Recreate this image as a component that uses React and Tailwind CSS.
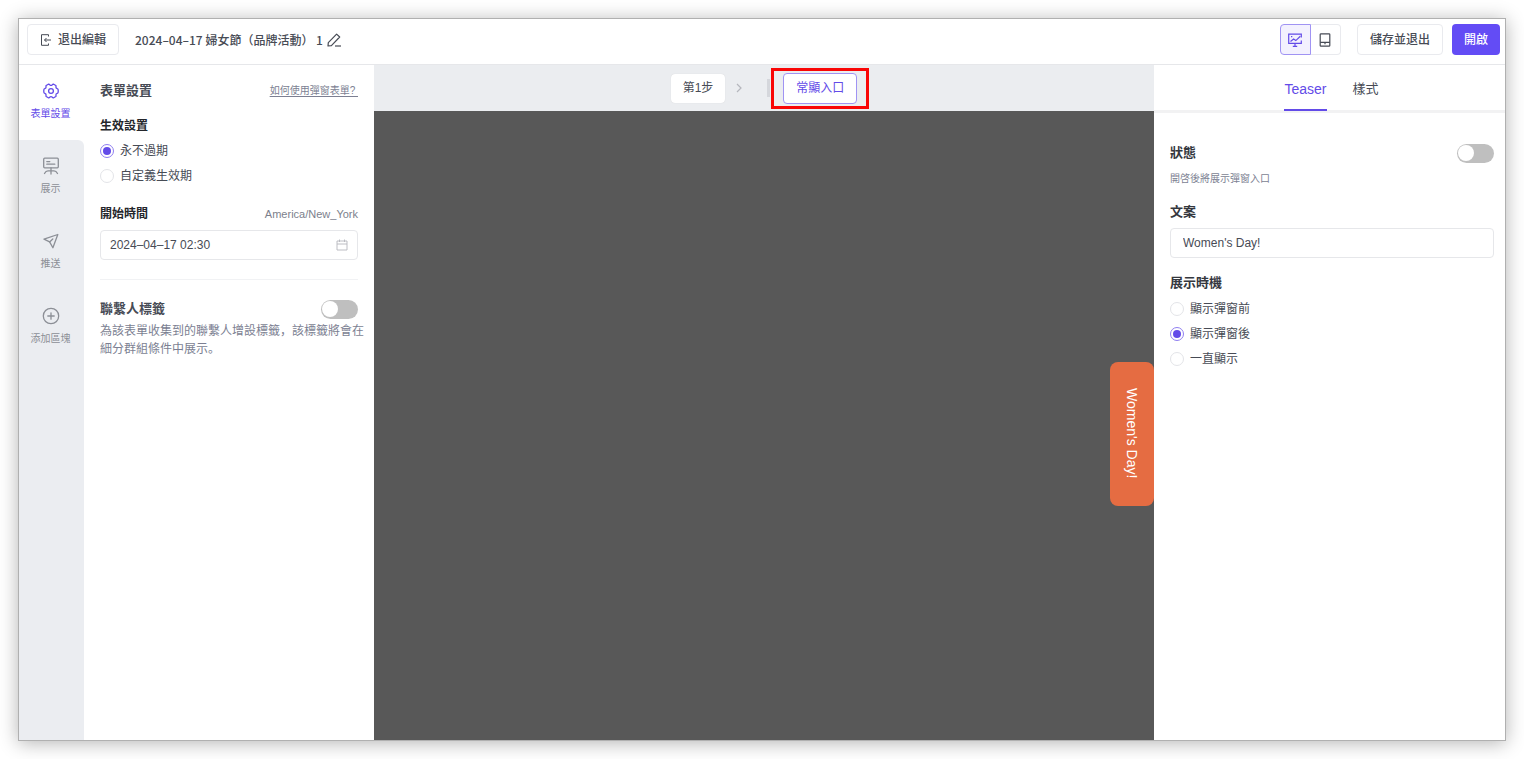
import { useState } from 'react';

const NAV = [
  { key: 'settings', label: '表單設置', Icon: GearIcon },
  { key: 'display', label: '展示', Icon: BoardIcon },
  { key: 'push', label: '推送', Icon: PlaneIcon },
  { key: 'block', label: '添加區塊', Icon: PlusIcon },
];

const TIMINGS = ['顯示彈窗前', '顯示彈窗後', '一直顯示'];

function GearIcon() {
  return (
    <svg width="16" height="16" viewBox="0 0 16 16" fill="none" stroke="currentColor" strokeWidth="1.3" strokeLinejoin="round">
      <path d="M5.300 1.200Q6.300 1 6.900 1.900Q8 2.900 9.100 1.900Q9.700 1 10.700 1.200L12.800 2.500Q13.300 3.200 12.900 4.100Q12.900 5.300 14.200 5.700Q15.200 6 15.200 7V9Q15.200 10 14.200 10.300Q12.900 10.700 12.900 11.900Q13.300 12.800 12.800 13.500L10.700 14.800Q9.700 15 9.100 14.100Q8 13.100 6.900 14.100Q6.300 15 5.300 14.800L3.200 13.500Q2.700 12.800 3.100 11.900Q3.100 10.700 1.800 10.300Q.8 10 .8 9V7Q.8 6 1.800 5.700Q3.100 5.300 3.100 4.100Q2.700 3.200 3.200 2.500Z" />
      <circle cx="8" cy="8" r="2.400" />
    </svg>
  );
}

function BoardIcon() {
  return (
    <svg width="18" height="18" viewBox="0 0 18 18" fill="none" stroke="currentColor" strokeWidth="1.3" strokeLinecap="round">
      <rect x="1.700" y="1.200" width="14.600" height="9.600" rx="1" />
      <path d="M4.800 4.600h3M4.800 7.200h8M9 10.800v6.200M2.500 16.500c1-2 2-2.700 3.500-2.700h6c1.500 0 2.500.700 3.500 2.700" />
    </svg>
  );
}

function PlaneIcon() {
  return (
    <svg width="16" height="16" viewBox="0 0 16 16" fill="none" stroke="currentColor" strokeWidth="1.300" strokeLinejoin="round" strokeLinecap="round">
      <path d="M14.800 1.500 1 6.200l5.600 2.700 3.300 5.800z" />
      <path d="m6.600 8.900 3.200-2.900" />
    </svg>
  );
}

function PlusIcon() {
  return (
    <svg width="18" height="18" viewBox="0 0 18 18" fill="none" stroke="currentColor" strokeWidth="1.3" strokeLinecap="round">
      <circle cx="9" cy="9" r="7.700" />
      <path d="M9 5.800v6.400M5.800 9h6.400" />
    </svg>
  );
}

function ExitIcon() {
  return (
    <svg width="12" height="12" viewBox="0 0 12 12" fill="none" stroke="currentColor" strokeWidth="1">
      <path d="M8.500 2.500V.700H1.500v10.600h7V9.500" />
      <path d="M11 6H4.500M6.500 4l-2 2 2 2" />
    </svg>
  );
}

function PencilIcon() {
  return (
    <svg width="14" height="14" viewBox="0 0 14 14" fill="none" stroke="currentColor" strokeWidth="1.200" strokeLinejoin="round">
      <path d="M9.600 1.100 12.700 4 4.400 12.700l-3.400.3.300-3.400z" />
      <path d="M8 13h6" />
    </svg>
  );
}

function DesktopIcon() {
  return (
    <svg width="14" height="14" viewBox="0 0 14 14" fill="none" stroke="currentColor" strokeWidth="1.200">
      <path d="M13.300 4.500V1.100H.700v9.300h12.600V7.500M7 10.400v3M4.800 13.300h4.400" />
      <path d="m2.500 8.500 3.100-2.400 2.200 1.500 4.500-4.300" />
      <path d="M3 3.700h1.300" />
    </svg>
  );
}

function TabletIcon() {
  return (
    <svg width="12" height="14" viewBox="0 0 12 14" fill="none" stroke="currentColor" strokeWidth="1.200">
      <rect x="1.200" y=".8" width="9.600" height="12.400" rx=".8" />
      <path d="M1.200 9.400h9.600M6 9.400v1.800" />
    </svg>
  );
}

function CalendarIcon() {
  return (
    <svg width="12" height="12" viewBox="0 0 12 12" fill="none" stroke="currentColor" strokeWidth=".9">
      <path d="M1 2h10v9H1zM1 5h10M3.500.500v2.500M8.500.500v2.500" />
    </svg>
  );
}

function Radio({ name, label, checked, onChange }) {
  return (
    <label className="flex h-[25px] items-center gap-[6px] text-xs text-[#474b55]">
      <input
        type="radio"
        name={name}
        checked={checked}
        onChange={onChange}
        className="grid size-[14px] appearance-none place-items-center rounded-full border border-[#e3e4e8] bg-white before:size-[8px] before:rounded-full checked:border-[#8f7ef0] checked:before:bg-[#634be8]"
      />
      {label}
    </label>
  );
}

function Toggle({ label }) {
  const [on, setOn] = useState(false);
  return (
    <input
      type="checkbox"
      role="switch"
      aria-label={label}
      checked={on}
      onChange={() => setOn(!on)}
      className="flex h-[19px] w-[37px] shrink-0 appearance-none items-center rounded-full bg-[#bfbfbf] px-px before:size-[16px] before:rounded-full before:bg-white checked:justify-end checked:bg-[#634cf5]"
    />
  );
}

export default function App() {
  const [active, setActive] = useState('settings');
  const [expiry, setExpiry] = useState('never');
  const [start, setStart] = useState('2024–04–17 02:30');
  const [copy, setCopy] = useState("Women's Day!");
  const [timing, setTiming] = useState('顯示彈窗後');

  return (
    <div className="flex min-h-screen bg-white p-[18px] font-['Liberation_Sans','Noto_Sans_CJK_SC',sans-serif] text-xs text-[#474b55]">
      <div className="flex flex-1 flex-col border border-[#b0b0b0] bg-white shadow-[0_2px_18px_rgba(0,0,0,0.3)]">
        {/* HEADER */}
        <header className="flex h-[46px] items-center justify-between border-b border-[#e6e7ea] pr-[5px] pb-1 pl-2">
          <div className="flex items-center">
            <button className="flex h-[31px] items-center gap-[6px] rounded border border-[#e9eaee] px-3 font-medium">
              <ExitIcon /> 退出編輯
            </button>
            <h1 className="ml-4 font-['Noto_Sans_CJK_SC',sans-serif] font-medium whitespace-pre">2024–04–17 婦女節（品牌活動） 1</h1>
            <button aria-label="編輯名稱" className="ml-1">
              <PencilIcon />
            </button>
          </div>
          <div className="flex items-center">
            <button aria-label="桌面版" className="grid h-[31px] w-[31px] place-items-center rounded-l border border-[#a093f3] bg-[#f3f1fe] text-[#634be8]">
              <DesktopIcon />
            </button>
            <button aria-label="手機版" className="grid h-[31px] w-[30px] place-items-center rounded-r border border-l-0 border-[#e9eaee]">
              <TabletIcon />
            </button>
            <button className="ml-4 h-[31px] rounded border border-[#e9eaee] px-3 font-medium">儲存並退出</button>
            <button className="ml-[9px] h-[31px] rounded bg-[#634cf5] px-3 font-medium text-white">開啟</button>
          </div>
        </header>

        <div className="flex flex-1">
          {/* SIDE NAV */}
          <nav className="flex w-[65px] shrink-0 flex-col bg-[#ebedf1]">
            {NAV.map(({ key, label, Icon }, i) => {
              const afterActive = i > 0 && NAV[i - 1].key === active;
              return (
                <div key={key} className={afterActive ? 'bg-white' : ''}>
                  <button
                    onClick={() => setActive(key)}
                    className={`flex h-[75px] w-full flex-col items-center justify-center gap-1 pr-[2px] pb-[2px] text-[10px] leading-[18px] ${
                      active === key ? 'bg-white text-[#634be8]' : 'bg-[#ebedf1] text-[#8c8f96]'
                    } ${afterActive ? 'rounded-tr-md' : ''}`}
                  >
                    <span className="grid h-[20px] place-items-center"><Icon /></span>
                    {label}
                  </button>
                </div>
              );
            })}
          </nav>

          {/* FORM SETTINGS */}
          <section className="w-[290px] shrink-0 px-4 pt-4">
            <div className="flex items-center justify-between">
              <h2 className="text-[13px] leading-5 font-bold">表單設置</h2>
              <a href="#help" className="text-[10px] whitespace-pre text-[#7c7f92] underline underline-offset-2">如何使用彈窗表單? </a>
            </div>

            <h3 className="mt-[15px] mb-[2px] leading-5 font-bold text-[#24262b]">生效設置</h3>
            <Radio name="expiry" label="永不過期" checked={expiry === 'never'} onChange={() => setExpiry('never')} />
            <Radio name="expiry" label="自定義生效期" checked={expiry === 'custom'} onChange={() => setExpiry('custom')} />

            <div className="mt-4 flex items-center justify-between">
              <label htmlFor="start" className="leading-5 font-bold text-[#24262b]">開始時間</label>
              <span className="text-[11px] text-[#7c7f8c]">America/New_York</span>
            </div>
            <div className="mt-[6px] flex h-[30px] items-center rounded border border-[#e6e7ea] px-[9px]">
              <input id="start" value={start} onChange={(e) => setStart(e.target.value)} className="min-w-0 flex-1 outline-none" />
              <span className="text-[#b5b7bd]"><CalendarIcon /></span>
            </div>

            <hr className="mt-[19px] border-[#f1f2f4]" />

            <div className="mt-[19px] flex items-center justify-between">
              <h2 className="text-[13px] leading-5 font-bold">聯繫人標籤</h2>
              <Toggle label="聯繫人標籤" />
            </div>
            <p className="-mr-2 mt-[3px] leading-[18px] text-[#7c7f92]">
              為該表單收集到的聯繫人增設標籤，該標籤將會在細分群組條件中展示。
            </p>
          </section>

          {/* PREVIEW */}
          <main className="flex min-w-0 flex-1 flex-col">
            <div className="flex h-[46px] items-center justify-center bg-[#ebedf0] pl-3">
              <button className="h-[29px] rounded bg-white px-3 shadow-[0_0_1px_rgba(0,0,0,0.15)]">第1步</button>
              <svg width="8" height="12" viewBox="0 0 8 12" fill="none" stroke="#b5b7bd" strokeWidth="1.200" className="mr-[24px] ml-[10px]">
                <path d="m2 2 4 4-4 4" />
              </svg>
              <span className="mr-px h-[18px] w-[3px] bg-[#d5d7dc]" />
              <div className="border-3 border-[#f90606] px-[9px] py-[2px]">
                <button className="h-[31px] rounded border border-[#a093f3] bg-white px-3 text-[#634be8]">常顯入口</button>
              </div>
            </div>
            <div className="flex flex-1 items-center justify-end bg-[#585858] pt-4">
              <button className="h-[144px] w-[44px] rounded-lg bg-[#e56c42] text-sm text-white [writing-mode:vertical-rl]">
                Women's Day!
              </button>
            </div>
          </main>

          {/* TEASER SETTINGS */}
          <aside className="w-[351px] shrink-0">
            <div className="flex h-[48px] justify-center gap-[26px] border-b-3 border-[#f2f2f3] pl-1 text-[13px]">
              <button className="-mb-px border-b-2 border-[#634be8] pt-1 text-sm text-[#634be8]">Teaser</button>
              <button className="-mb-px border-b-2 border-transparent pt-1">樣式</button>
            </div>
            <div className="pt-[30px] pr-[11px] pl-4">
              <div className="flex items-center justify-between">
                <h2 className="text-[13px] leading-5 font-bold text-[#34373e]">狀態</h2>
                <Toggle label="狀態" />
              </div>
              <p className="mt-[7px] text-[10px] leading-[18px] text-[#7c7f92]">開啓後將展示彈窗入口</p>

              <label htmlFor="copy" className="mt-[14px] block text-[13px] leading-5 font-bold text-[#34373e]">文案</label>
              <input
                id="copy"
                value={copy}
                onChange={(e) => setCopy(e.target.value)}
                className="mt-[6px] block h-[30px] w-full rounded border border-[#e6e7ea] px-3 outline-none"
              />

              <h2 className="mt-[15px] mb-[3px] text-[13px] leading-5 font-bold text-[#34373e]">展示時機</h2>
              {TIMINGS.map((t) => (
                <Radio key={t} name="timing" label={t} checked={timing === t} onChange={() => setTiming(t)} />
              ))}
            </div>
          </aside>
        </div>
      </div>
    </div>
  );
}
